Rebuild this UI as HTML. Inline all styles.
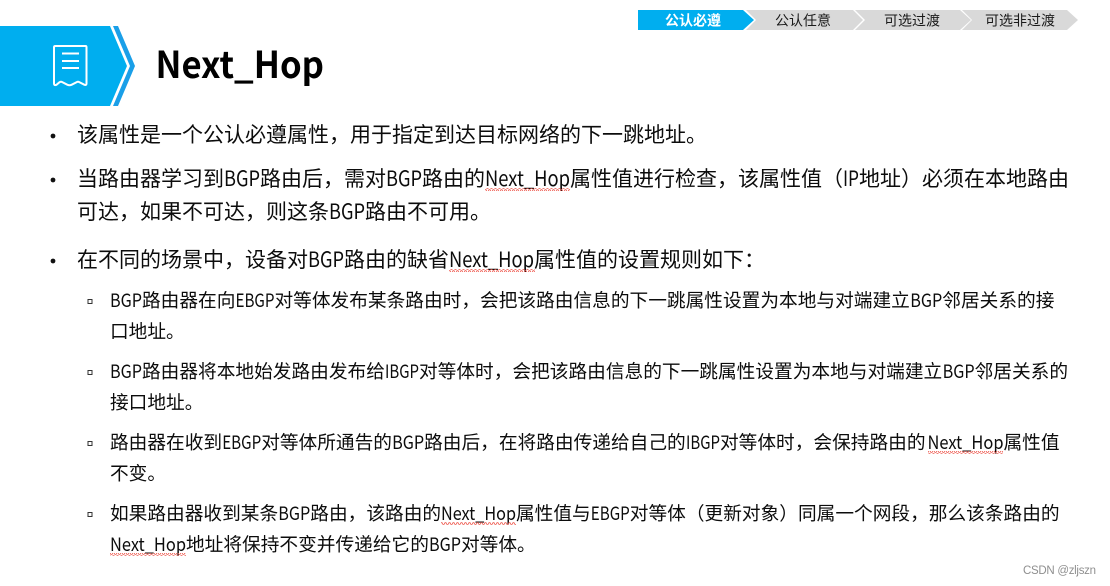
<!DOCTYPE html>
<html lang="zh-CN">
<head>
<meta charset="utf-8">
<title>Next_Hop</title>
<style>
html,body{margin:0;padding:0;background:#fff;width:1110px;height:586px;overflow:hidden}
svg{display:block}
text{font-family:"Noto Sans CJK SC","Liberation Sans",sans-serif;fill:#0c0c0c}
.m{font-size:21px}
.s{font-size:18.7px}
.t{font-size:14px;fill:#1a1a1a}
</style>
</head>
<body>
<svg width="1110" height="586" viewBox="0 0 1110 586" xmlns="http://www.w3.org/2000/svg">
<defs>
<pattern id="w" width="4" height="3" patternUnits="userSpaceOnUse">
<path d="M0 2.5L1 .7L2 .7L3 2.5L4 2.5" fill="none" stroke="#ee5a50" stroke-width=".8"/>
</pattern>
</defs>

<!-- tabs -->
<polygon points="638,10 743,10 754,20 743,30 638,30" fill="#00aeef"/>
<polygon points="746,10 853,10 863,20 853,30 746,30 756,20" fill="#d9d9d9"/>
<polygon points="855,10 960,10 971,20 960,30 855,30 865,20" fill="#d9d9d9"/>
<polygon points="962,10 1067,10 1078,20 1067,30 962,30 972,20" fill="#d9d9d9"/>
<text class="t" x="665" y="25.500" style="fill:#fff;font-weight:700">公认必遵</text>
<text class="t" x="775" y="25.500">公认任意</text>
<text class="t" x="884" y="25.500">可选过渡</text>
<text class="t" x="985" y="25.500">可选非过渡</text>

<!-- header -->
<polygon points="0,26 110,26 127,66 110,106 0,106" fill="#00aeef"/>
<polygon points="113,26 118,26 135,66 118,106 113,106 130,66" fill="#1a9fe8"/>
<path d="M55.500 46H85.500Q86.500 46 86.500 47.200V83.500Q86.500 85.500 84.500 84.800L79.500 82.200Q78 81.400 76.500 82.200L71.500 84.800Q69.500 85.600 67.500 84.800L62.500 82.200Q61 81.400 59.500 82.200L56.500 84.800Q54 85.800 54 83.500V47.200Q54 46 55.500 46Z" fill="none" stroke="#fff" stroke-width="2"/>
<path d="M62 53.500H79M62 61H79M62 68H79" stroke="#fff" stroke-width="2" fill="none"/>
<text x="155.500" y="78" font-size="37" font-weight="700" textLength="168.500" lengthAdjust="spacingAndGlyphs" style="fill:#000">Next_Hop</text>

<!-- bullets -->
<circle cx="53" cy="136" r="2.400" fill="#111"/>
<circle cx="53" cy="180" r="2.400" fill="#111"/>
<circle cx="53" cy="261" r="2.400" fill="#111"/>
<g fill="none" stroke="#333" stroke-width="1">
<rect x="88" y="299.500" width="4" height="4"/>
<rect x="88" y="370.500" width="4" height="4"/>
<rect x="88" y="441.500" width="4" height="4"/>
<rect x="88" y="512.500" width="4" height="4"/>
</g>

<!-- main text -->
<text class="m" x="77" y="142">该属性是一个公认必遵属性，用于指定到达目标网络的下一跳地址。</text>

<g class="m">
<text class="m" x="77" y="186">当路由器学习到</text>
<text class="m" x="224" y="186" textLength="36" lengthAdjust="spacingAndGlyphs">BGP</text>
<text class="m" x="260" y="186">路由后，需对</text>
<text class="m" x="386" y="186" textLength="36" lengthAdjust="spacingAndGlyphs">BGP</text>
<text class="m" x="422" y="186">路由的</text>
<text class="m" x="485" y="186" textLength="85" lengthAdjust="spacingAndGlyphs">Next_Hop</text>
<text class="m" x="570" y="186">属性值进行检查，该属性值（</text>
<text class="m" x="843" y="186" textLength="16" lengthAdjust="spacingAndGlyphs">IP</text>
<text class="m" x="859" y="186">地址）必须在本地路由</text>
</g>

<text class="m" x="77" y="219">可达，如果不可达，则这条</text>
<text class="m" x="329" y="219" textLength="36" lengthAdjust="spacingAndGlyphs">BGP</text>
<text class="m" x="365" y="219">路由不可用。</text>

<text class="m" x="77" y="267">在不同的场景中，设备对</text>
<text class="m" x="308" y="267" textLength="36" lengthAdjust="spacingAndGlyphs">BGP</text>
<text class="m" x="344" y="267">路由的缺省</text>
<text class="m" x="449" y="267" textLength="85" lengthAdjust="spacingAndGlyphs">Next_Hop</text>
<text class="m" x="534" y="267">属性值的设置规则如下：</text>

<!-- sub 1 -->
<text class="s" x="110" y="307" textLength="32" lengthAdjust="spacingAndGlyphs">BGP</text>
<text class="s" x="142" y="307">路由器在向</text>
<text class="s" x="235.500" y="307" textLength="39" lengthAdjust="spacingAndGlyphs">EBGP</text>
<text class="s" x="274.500" y="307">对等体发布某条路由时，会把该路由信息的下一跳属性设置为本地与对端建立</text>
<text class="s" x="910.300" y="307" textLength="32" lengthAdjust="spacingAndGlyphs">BGP</text>
<text class="s" x="942.300" y="307">邻居关系的接</text>
<text class="s" x="110" y="338">口地址。</text>

<!-- sub 2 -->
<text class="s" x="110" y="378" textLength="32" lengthAdjust="spacingAndGlyphs">BGP</text>
<text class="s" x="142" y="378">路由器将本地始发路由发布给</text>
<text class="s" x="385" y="378" textLength="34" lengthAdjust="spacingAndGlyphs">IBGP</text>
<text class="s" x="419" y="378">对等体时，会把该路由信息的下一跳属性设置为本地与对端建立</text>
<text class="s" x="942.600" y="378" textLength="32" lengthAdjust="spacingAndGlyphs">BGP</text>
<text class="s" x="974.600" y="378">邻居关系的</text>
<text class="s" x="110" y="409">接口地址。</text>

<!-- sub 3 -->
<text class="s" x="110" y="449">路由器在收到</text>
<text class="s" x="222.200" y="449" textLength="39" lengthAdjust="spacingAndGlyphs">EBGP</text>
<text class="s" x="261.200" y="449">对等体所通告的</text>
<text class="s" x="392.100" y="449" textLength="32" lengthAdjust="spacingAndGlyphs">BGP</text>
<text class="s" x="424.100" y="449">路由后，在将路由传递给自己的</text>
<text class="s" x="686" y="449" textLength="34" lengthAdjust="spacingAndGlyphs">IBGP</text>
<text class="s" x="720" y="449">对等体时，会保持路由的</text>
<text class="s" x="927.500" y="449" textLength="76" lengthAdjust="spacingAndGlyphs">Next_Hop</text>
<text class="s" x="1003.500" y="449">属性值</text>
<text class="s" x="110" y="480">不变。</text>

<!-- sub 4 -->
<text class="s" x="110" y="520">如果路由器收到某条</text>
<text class="s" x="278.300" y="520" textLength="32" lengthAdjust="spacingAndGlyphs">BGP</text>
<text class="s" x="310.300" y="520">路由，该路由的</text>
<text class="s" x="441" y="520" textLength="75" lengthAdjust="spacingAndGlyphs">Next_Hop</text>
<text class="s" x="516" y="520">属性值与</text>
<text class="s" x="590.800" y="520" textLength="39" lengthAdjust="spacingAndGlyphs">EBGP</text>
<text class="s" x="629.800" y="520">对等体（更新对象）同属一个网段，那么该条路由的</text>
<text class="s" x="110" y="551" textLength="76" lengthAdjust="spacingAndGlyphs">Next_Hop</text>
<text class="s" x="186" y="551">地址将保持不变并传递给它的</text>
<text class="s" x="429" y="551" textLength="32" lengthAdjust="spacingAndGlyphs">BGP</text>
<text class="s" x="461" y="551">对等体。</text>

<!-- squiggles -->
<rect x="485" y="188" width="85" height="3" fill="url(#w)"/>
<rect x="449" y="269" width="86" height="3" fill="url(#w)"/>
<rect x="928" y="451" width="75" height="3" fill="url(#w)"/>
<rect x="441" y="522" width="75" height="3" fill="url(#w)"/>
<rect x="110" y="553" width="76" height="3" fill="url(#w)"/>

<!-- watermark -->
<text x="1023" y="574" font-size="11.500" style="font-family:'Liberation Sans',sans-serif;fill:#8f8f8f" textLength="73">CSDN @zljszn</text>
</svg>
</body>
</html>
